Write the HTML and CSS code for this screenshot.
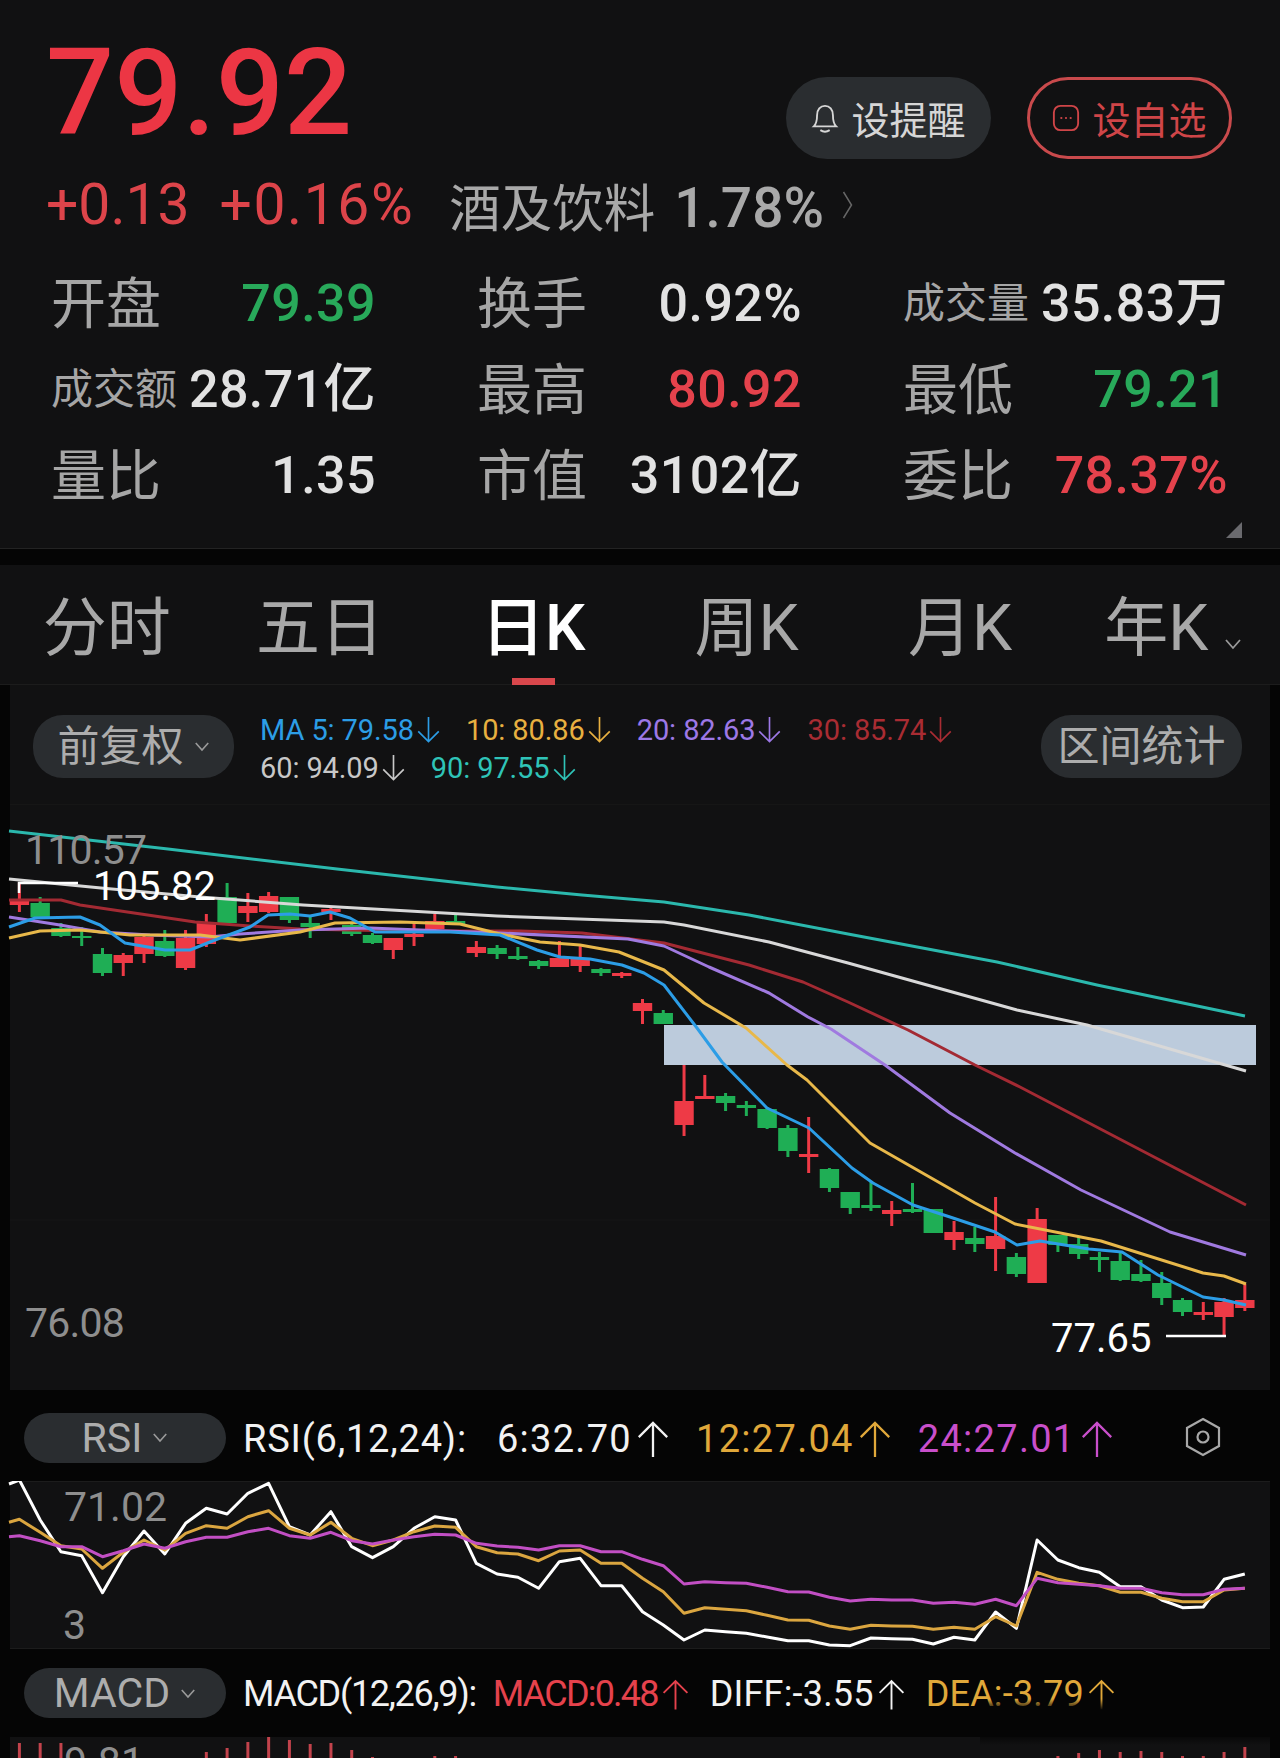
FILE: index.html
```html
<!DOCTYPE html>
<html lang="zh-CN">
<head>
    <meta charset="UTF-8">
    <meta name="viewport" content="width=device-width, initial-scale=1.0">
    <title>行情</title>
    <link rel="stylesheet" href="styles.css">
</head>
<body>
    <svg class="defs" width="0" height="0">
        <symbol id="arrow" viewBox="0 0 34 38">
            <path d="M17 38V2M2 17L17 2L32 17" fill="none" stroke="currentColor" stroke-width="2.4"/>
        </symbol>
        <symbol id="chevron" viewBox="0 0 18 12">
            <path d="M2 2L9 10L16 2" fill="none" stroke="currentColor" stroke-width="1.8"/>
        </symbol>
    </svg>

    <section class="head">
        <div class="price-row">
            <div class="price">79.92</div>
            <div class="actions">
                <div class="btn btn-alert">
                    <svg class="btn-icon" viewBox="0 0 30 32">
                        <path d="M3 25C6 22 6.500 19 6.500 13C6.500 7 10 3 15 3C20 3 23.500 7 23.500 13C23.500 19 24 22 27 25Z" fill="none" stroke="currentColor" stroke-width="2"/>
                        <path d="M10 29C13 31 17 31 20 29" fill="none" stroke="currentColor" stroke-width="2"/>
                    </svg>
                    <span>设提醒</span>
                </div>
                <div class="btn btn-watch">
                    <svg class="btn-icon" viewBox="0 0 30 30">
                        <rect x="2" y="2" width="26" height="26" rx="7" fill="none" stroke="currentColor" stroke-width="2"/>
                        <circle cx="10" cy="15" r="1.200" fill="currentColor"/>
                        <circle cx="15" cy="15" r="1.200" fill="currentColor"/>
                        <circle cx="20" cy="15" r="1.200" fill="currentColor"/>
                    </svg>
                    <span>设自选</span>
                </div>
            </div>
        </div>
        <div class="change-row">
            <span class="change">+0.13</span>
            <span class="change change-pct">+0.16%</span>
            <span class="sector">酒及饮料<span class="sector-pct">1.78%</span></span>
            <svg class="sector-caret" viewBox="0 0 10 28">
                <path d="M1 1L9 14L1 27" fill="none" stroke="currentColor" stroke-width="1.500"/>
            </svg>
        </div>
        <div class="stats">
            <div class="stat"><span class="label">开盘</span><span class="value green">79.39</span></div>
            <div class="stat"><span class="label">换手</span><span class="value">0.92%</span></div>
            <div class="stat"><span class="label small">成交量</span><span class="value">35.83万</span></div>
            <div class="stat"><span class="label small">成交额</span><span class="value">28.71亿</span></div>
            <div class="stat"><span class="label">最高</span><span class="value red">80.92</span></div>
            <div class="stat"><span class="label">最低</span><span class="value green">79.21</span></div>
            <div class="stat"><span class="label">量比</span><span class="value">1.35</span></div>
            <div class="stat"><span class="label">市值</span><span class="value">3102亿</span></div>
            <div class="stat"><span class="label">委比</span><span class="value red">78.37%</span></div>
        </div>
        <div class="corner"></div>
    </section>

    <nav class="tabs">
        <div class="tab">分时</div>
        <div class="tab">五日</div>
        <div class="tab active">日K</div>
        <div class="tab">周K</div>
        <div class="tab">月K</div>
        <div class="tab">年K<svg class="tab-chevron"><use href="#chevron"/></svg></div>
    </nav>

    <div class="toolbar">
        <div class="pill pill-adjust">前复权<svg class="pill-chevron"><use href="#chevron"/></svg></div>
        <div class="legend">
            <div class="legend-row">
                <span class="ma ma5">MA 5: 79.58<svg class="arrow-down"><use href="#arrow"/></svg></span>
                <span class="ma ma10">10: 80.86<svg class="arrow-down"><use href="#arrow"/></svg></span>
                <span class="ma ma20">20: 82.63<svg class="arrow-down"><use href="#arrow"/></svg></span>
                <span class="ma ma30">30: 85.74<svg class="arrow-down"><use href="#arrow"/></svg></span>
            </div>
            <div class="legend-row">
                <span class="ma ma60">60: 94.09<svg class="arrow-down"><use href="#arrow"/></svg></span>
                <span class="ma ma90">90: 97.55<svg class="arrow-down"><use href="#arrow"/></svg></span>
            </div>
        </div>
        <div class="pill pill-range">区间统计</div>
    </div>

    <div class="panel panel-main">
        <svg id="kline" viewBox="0 805 1280 585" width="1280" height="585">
            <text class="axis axis-tight" x="25" y="864">110.57</text>
            <text class="mark" x="93" y="900">105.82</text>
            <text class="axis axis-tight" x="25" y="1337">76.08</text>
            <text class="mark" x="1051" y="1352">77.65</text>
        </svg>
    </div>

    <div class="ind-head">
        <div class="pill pill-ind">RSI<svg class="pill-chevron"><use href="#chevron"/></svg></div>
        <span class="ind-title">RSI(6,12,24):</span>
        <span class="ind-val white">6:32.70<svg class="arrow-up"><use href="#arrow"/></svg></span>
        <span class="ind-val gold">12:27.04<svg class="arrow-up"><use href="#arrow"/></svg></span>
        <span class="ind-val pink">24:27.01<svg class="arrow-up"><use href="#arrow"/></svg></span>
        <svg class="gear" viewBox="0 0 36 40">
            <path d="M18 2L34 11V29L18 38L2 29V11Z" fill="none" stroke="currentColor" stroke-width="2.200"/>
            <circle cx="18" cy="20" r="5.500" fill="none" stroke="currentColor" stroke-width="2.200"/>
        </svg>
    </div>
    <div class="panel panel-rsi">
        <svg id="rsi" viewBox="0 1481 1280 168" width="1280" height="168">
            <text class="axis" x="64" y="1521">71.02</text>
            <text class="axis" x="63" y="1639">3</text>
        </svg>
    </div>

    <div class="ind-head ind-head-macd">
        <div class="pill pill-ind">MACD<svg class="pill-chevron"><use href="#chevron"/></svg></div>
        <span class="ind-title">MACD(12,26,9):</span>
        <span class="ind-val red tight">MACD:0.48<svg class="arrow-up"><use href="#arrow"/></svg></span>
        <span class="ind-val white">DIFF:-3.55<svg class="arrow-up"><use href="#arrow"/></svg></span>
        <span class="ind-val gold">DEA:-3.79<svg class="arrow-up"><use href="#arrow"/></svg></span>
    </div>
    <div class="panel panel-macd">
        <svg id="macd" viewBox="0 1737 1280 21" width="1280" height="21">
            <text class="axis" x="64" y="1776">9.81</text>
        </svg>
    </div>
    <div class="smudge"></div>

    <script src="chart.js"></script>
</body>
</html>
```

FILE: styles.css
```css
* {
    box-sizing: border-box;
}
html, body {
    margin: 0;
    height: 1758px;
    overflow: hidden;
}
body {
    position: relative;
    background: #050505;
    color: #e2e2e2;
    font-family: Roboto, "Noto Sans CJK SC", sans-serif;
}
.defs {
    position: absolute;
}
.green { color: #28a95a; }
.red { color: #e5424c; }
.white { color: #f2f2f2; }
.gold { color: #e0a83a; }
.pink { color: #c94fcb; }

/* quote header */
.head {
    position: relative;
    height: 549px;
    padding: 0 48px 0 46px;
    background: #111112;
    border-bottom: 1px solid #232323;
}
.price-row {
    display: flex;
    justify-content: space-between;
    align-items: flex-start;
    height: 170px;
}
.price {
    margin-top: 32px;
    font-size: 120px;
    line-height: 122px;
    font-weight: 500;
    color: #ec3644;
}
.actions {
    display: flex;
    gap: 36px;
    margin-top: 77px;
}
.btn {
    display: flex;
    align-items: center;
    justify-content: center;
    gap: 12px;
    width: 205px;
    height: 82px;
    border-radius: 41px;
    font-size: 38px;
}
.btn span {
    line-height: 44px;
    margin-top: 5px;
}
.btn-icon {
    width: 28px;
    height: 30px;
}
.btn-alert {
    background: #2a2d30;
    color: #d6d6d6;
}
.btn-watch {
    border: 3px solid #c94a4c;
    color: #cf4548;
}
.change-row {
    display: flex;
    align-items: center;
    height: 70px;
}
.change {
    margin-right: 30px;
    font-size: 57px;
    line-height: 70px;
    color: #dd444a;
    white-space: nowrap;
}
.change-pct {
    letter-spacing: 1.600px;
}
.sector {
    margin: 8px 0 0 5px;
    font-size: 51.500px;
    line-height: 70px;
    color: #a9a9a9;
    white-space: nowrap;
}
.sector-pct {
    margin-left: 19px;
    font-size: 55px;
    font-weight: 500;
}
.sector-caret {
    width: 11px;
    height: 28px;
    margin-left: 18px;
    color: #666;
}
.stats {
    display: grid;
    grid-template-columns: repeat(3, 325px);
    grid-auto-rows: 86px;
    column-gap: 101px;
    margin: 21px 0 0 5px;
}
.stat {
    display: flex;
    justify-content: space-between;
    align-items: center;
    white-space: nowrap;
}
.label {
    font-size: 55px;
    line-height: 60px;
    color: #a6a6a6;
}
.label.small {
    font-size: 42px;
}
.value {
    font-size: 52px;
    line-height: 60px;
    font-weight: 500;
    letter-spacing: 0.4px;
}
.corner {
    position: absolute;
    right: 38px;
    bottom: 10px;
    border-left: 16px solid transparent;
    border-bottom: 16px solid #6a6a6e;
}

/* period tabs */
.tabs {
    display: grid;
    grid-template-columns: repeat(6, 1fr);
    align-items: center;
    height: 120px;
    margin-top: 16px;
    background: #111112;
    border-bottom: 1px solid #1c1c1c;
}
.tab {
    position: relative;
    height: 120px;
    text-align: center;
    font-size: 64px;
    line-height: 128px;
    color: #a8a8a8;
    white-space: nowrap;
}
.tab.active {
    color: #fff;
    font-weight: 500;
}
.tab.active::after {
    content: "";
    position: absolute;
    left: 50%;
    bottom: 0;
    width: 43px;
    height: 7px;
    margin-left: -21px;
    background: #d9474c;
}
.tab-chevron {
    width: 18px;
    height: 12px;
    margin-left: 16px;
    color: #9a9a9a;
}

/* moving average bar */
.toolbar {
    display: flex;
    align-items: flex-start;
    height: 120px;
    margin: 0 10px;
    padding: 30px 28px 0 23px;
    background: #111112;
    border-bottom: 1px solid #161616;
}
.pill {
    display: flex;
    align-items: center;
    justify-content: center;
    background: #2a2d30;
    color: #adadad;
    white-space: nowrap;
}
.pill-adjust, .pill-range {
    width: 201px;
    height: 63px;
    border-radius: 30px;
    font-size: 42px;
    line-height: 50px;
}
.pill-chevron {
    width: 16px;
    height: 11px;
    margin-left: 10px;
    color: #9a9a9a;
}
.legend {
    flex: 1;
    margin: -4px 0 0 26px;
}
.legend-row {
    display: flex;
    height: 38px;
    align-items: center;
}
.ma {
    display: flex;
    align-items: center;
    margin-right: 24px;
    font-size: 29px;
    letter-spacing: -0.1px;
    white-space: nowrap;
}
.ma5 { color: #2c9de6; }
.ma10 { color: #e8b040; }
.ma20 { color: #9d78e6; }
.ma30 { color: #a92c33; }
.ma60 { color: #c8c8c8; }
.ma90 { color: #2fc4b8; }
.arrow-down {
    width: 27px;
    height: 26px;
    margin-left: 1px;
    transform: rotate(180deg);
}

/* chart panels */
.panel {
    margin: 0 10px;
    background: #111112;
}
.panel svg {
    display: block;
    margin-left: -10px;
}
.panel-main {
    height: 585px;
}
.panel-rsi {
    height: 168px;
    border-top: 1px solid #1c1c1c;
    border-bottom: 1px solid #1c1c1c;
}
.panel-rsi svg {
    margin-top: -1px;
}
.panel-macd {
    height: 21px;
    overflow: hidden;
}
.axis {
    font-size: 41px;
    fill: #8e8e8e;
}
.axis-tight {
    letter-spacing: -0.8px;
}
.mark {
    font-size: 40px;
    fill: #fff;
}
.up { fill: #ee3a46; stroke: #ee3a46; }
.down { fill: #1fae55; stroke: #1fae55; }
.band { fill: #bccbdc; }
.grid { stroke: #161616; stroke-width: 1; }
.leader { stroke: #fff; stroke-width: 2.500; }
.line { fill: none; stroke-width: 3; stroke-linejoin: round; }
.line-ma5 { stroke: #2c9de6; }
.line-ma10 { stroke: #e8b84a; }
.line-ma20 { stroke: #a07ae0; }
.line-ma30 { stroke: #a32a33; }
.line-ma60 { stroke: #d8d8d8; }
.line-ma90 { stroke: #2bb8ad; }
.line-white { stroke: #fff; }
.line-gold { stroke: #dba640; }
.line-pink { stroke: #c24fc4; }
.bar { stroke: #c2434c; stroke-width: 3; }

/* indicator header */
.ind-head {
    display: flex;
    align-items: center;
    height: 91px;
    padding: 4px 0 0 24px;
}
.ind-head-macd {
    height: 88px;
    padding-top: 0;
}
.pill-ind {
    width: 202px;
    height: 50px;
    border-radius: 25px;
    margin-right: 17px;
    font-size: 41px;
    line-height: 50px;
}
.ind-title {
    margin: 2px 30px 0 0;
    font-size: 38px;
    letter-spacing: 0.8px;
    color: #f2f2f2;
    white-space: nowrap;
}
.ind-val {
    display: flex;
    align-items: center;
    margin: 2px 26px 0 0;
    font-size: 38px;
    letter-spacing: 1.300px;
    white-space: nowrap;
}
.ind-head-macd .ind-title {
    margin-right: 17px;
    font-size: 36px;
    letter-spacing: -1.300px;
}
.ind-head-macd .ind-val {
    margin-right: 21px;
    font-size: 36px;
    letter-spacing: 0.2px;
}
.ind-head-macd .ind-val.tight {
    letter-spacing: -1.800px;
}
.arrow-up {
    width: 34px;
    height: 36px;
    margin-left: 4px;
}
.ind-head-macd .arrow-up {
    width: 27px;
    height: 31px;
}
.gear {
    position: absolute;
    left: 1185px;
    top: 1417px;
    width: 36px;
    height: 40px;
    color: #a8a8a8;
}
.smudge {
    position: absolute;
    left: 980px;
    top: 1699px;
    width: 290px;
    height: 46px;
    background: linear-gradient(to bottom, rgba(5, 5, 5, 0), #050505 24%, #050505 76%, rgba(5, 5, 5, 0));
}
```

FILE: chart.js
```javascript
const NS = 'http://www.w3.org/2000/svg';
const X0 = 19.4, STEP = 20.77;

function slotX(i) {
    return X0 + STEP * i;
}

function add(svg, name, attrs, before) {
    const el = document.createElementNS(NS, name);
    for (const key in attrs) {
        el.setAttribute(key, attrs[key]);
    }
    svg.insertBefore(el, before || null);
    return el;
}

// [dir, bodyTop, bodyBottom, wickTop, wickBottom], dir 1 = red, 0 = green
const candles = [
    [1,899,905,883,912],[0,903,917,897,918],[0,928,936,923,937],[0,936,938,927,946],[0,954,973,948,976],
    [1,955,963,953,976],[1,937,954,935,963],[0,941,956,930,957],[1,938,968,930,970],[1,922,944,914,947],
    [0,897,923,883,924],[1,906,913,893,922],[1,896,912,892,913],[0,897,920,897,923],[0,923,927,916,938],
    [1,909,912,908,920],[0,925,934,922,936],[0,935,943,933,944],[1,938,950,938,959],[1,934,937,923,946],
    [1,921,929,914,930],[0,921,924,914,925],[1,947,953,941,957],[0,948,954,945,959],[0,956,959,947,960],
    [0,961,966,960,969],[1,958,967,941,967],[1,958,966,945,972],[0,969,973,968,976],[1,973,976,972,978],
    [1,1003,1011,999,1024],[0,1013,1024,1010,1024],[1,1101,1125,1060,1136],[1,1096,1099,1075,1099],[0,1096,1103,1093,1111],
    [0,1105,1108,1101,1116],[0,1109,1128,1107,1129],[0,1128,1151,1125,1157],[1,1154,1157,1117,1173],[0,1169,1188,1168,1192],
    [0,1192,1208,1192,1214],[0,1205,1208,1182,1211],[1,1210,1214,1201,1226],[0,1209,1212,1183,1213],[0,1209,1233,1209,1233],
    [1,1232,1240,1221,1250],[0,1238,1244,1227,1252],[1,1236,1249,1197,1271],[0,1257,1274,1253,1277],[1,1219,1283,1208,1283],
    [0,1235,1245,1235,1252],[0,1244,1254,1237,1259],[0,1257,1260,1252,1272],[0,1261,1280,1252,1281],[0,1274,1281,1260,1282],
    [0,1283,1298,1272,1305],[0,1300,1312,1298,1316],[1,1312,1315,1302,1320],[1,1302,1317,1298,1335],[1,1300,1308,1284,1311]
];

const maLines = {
    ma90: [[9,831],[168,849],[337,869],[497,887],[582,895],[664,902],[749,915],[848,934],[997,962],[1097,985],[1245,1016]],
    ma60: [[9,879],[101,888],[200,897],[303,905],[497,916],[664,922],[684,925],[769,942],[848,963],[1017,1010],[1087,1025],[1246,1071]],
    ma30: [[9,900],[61,900],[80,905],[195,922],[250,926],[300,929],[400,931],[520,931],[582,933],[664,943],[749,965],[803,982],
           [848,1002],[908,1030],[975,1065],[1020,1087],[1246,1205]],
    ma20: [[9,917],[60,925],[100,932],[150,935],[210,937],[240,934],[300,930],[370,928],[420,930],[500,933],[628,939],[664,946],
           [709,967],[769,993],[808,1017],[831,1029],[885,1065],[950,1113],[1015,1153],[1081,1190],[1170,1232],[1246,1255]],
    ma10: [[9,938],[40,931],[80,930],[130,935],[200,935],[240,940],[300,932],[335,923],[400,922],[460,924],[500,934],[540,942],
           [580,945],[619,952],[664,970],[704,1003],[746,1028],[787,1065],[807,1080],[870,1143],[975,1203],[1015,1224],[1101,1241],
           [1203,1273],[1224,1276],[1246,1284]],
    ma5: [[9,927],[35,918],[80,917],[100,925],[125,943],[165,950],[190,950],[215,940],[250,927],[268,915],[290,914],[310,916],
          [330,912],[350,918],[375,932],[450,932],[500,935],[537,950],[560,957],[590,959],[622,965],[644,973],[664,985],[697,1028],
          [722,1062],[767,1108],[809,1128],[852,1168],[873,1183],[913,1205],[950,1217],[995,1232],[1017,1245],[1040,1241],
          [1089,1249],[1122,1252],[1158,1275],[1203,1297],[1224,1300],[1246,1305]]
};

// rsi values measured in thirds of a pixel from y = 1400; first value sits at the panel edge
const rsiLines = {
    pink: [410,407,422,440,440,470,452,432,445,425,412,412,395,385,407,415,397,422,432,420,410,403,405,430,438,442,450,437,437,455,455,478,
           497,552,545,548,550,562,575,576,592,603,598,600,600,610,607,613,598,617,535,548,553,557,565,565,578,584,584,568,565],
    gold: [367,358,397,437,447,505,457,420,450,400,377,385,350,332,385,405,367,415,437,420,395,378,382,440,458,462,482,453,450,490,490,535,
           575,640,623,628,632,646,660,661,678,688,676,678,679,688,682,688,650,678,517,538,550,557,577,577,595,605,605,570,565],
    white: [252,240,360,455,467,578,470,393,462,370,325,342,280,250,380,405,335,440,473,440,385,350,360,490,522,532,565,485,475,557,557,635,
            675,720,690,695,700,711,722,722,735,737,714,716,718,732,712,720,636,685,420,480,503,517,560,560,600,623,621,538,522]
};

// [slot, top of bar]
const macdBars = [
    [0,1743],[1,1743],[2,1743],[9,1752],[10,1748],[11,1742],[12,1737],[13,1740],[14,1744],[15,1743],[16,1750],[17,1757],
    [20,1756],[21,1756],[50,1756],[51,1753],[52,1750],[53,1752],[54,1751],[55,1752],[56,1756],[57,1756],[58,1752],[59,1747]
];

function toPoints(list) {
    return list.map(p => p[0] + ',' + p[1]).join(' ');
}

function drawKline() {
    const svg = document.getElementById('kline');
    const firstText = svg.querySelector('text');
    add(svg, 'line', { class: 'grid', x1: 10, y1: 1220, x2: 1270, y2: 1220 }, firstText);
    candles.forEach((c, i) => {
        const x = slotX(i);
        const cls = c[0] ? 'up' : 'down';
        add(svg, 'line', { class: cls, x1: x, x2: x, y1: c[3], y2: c[4], 'stroke-width': 3 }, firstText);
        add(svg, 'rect', { class: cls, x: x - 9.700, y: c[1], width: 19.400, height: Math.max(c[2] - c[1], 2), 'stroke-width': 0 }, firstText);
    });
    add(svg, 'rect', { class: 'band', x: 664, y: 1025, width: 592, height: 40 }, firstText);
    for (const name in maLines) {
        add(svg, 'polyline', { class: 'line line-' + name, points: toPoints(maLines[name]) }, firstText);
    }
    add(svg, 'polyline', { class: 'leader', points: '19,893 19,883 78,883', fill: 'none' });
    add(svg, 'polyline', { class: 'leader', points: '1166,1336 1226,1336', fill: 'none' });
}

function drawRsi() {
    const svg = document.getElementById('rsi');
    const firstText = svg.querySelector('text');
    for (const name of ['white', 'gold', 'pink']) {
        const pts = rsiLines[name].map((v, i) => [i === 0 ? 9 : slotX(i - 1).toFixed(1), (1400 + v / 3).toFixed(1)]);
        add(svg, 'polyline', { class: 'line line-' + name, points: toPoints(pts) }, firstText);
    }
}

function drawMacd() {
    const svg = document.getElementById('macd');
    const firstText = svg.querySelector('text');
    macdBars.forEach(b => {
        const x = slotX(b[0]);
        add(svg, 'line', { class: 'bar', x1: x, x2: x, y1: b[1], y2: 1758 }, firstText);
    });
}

drawKline();
drawRsi();
drawMacd();
```
